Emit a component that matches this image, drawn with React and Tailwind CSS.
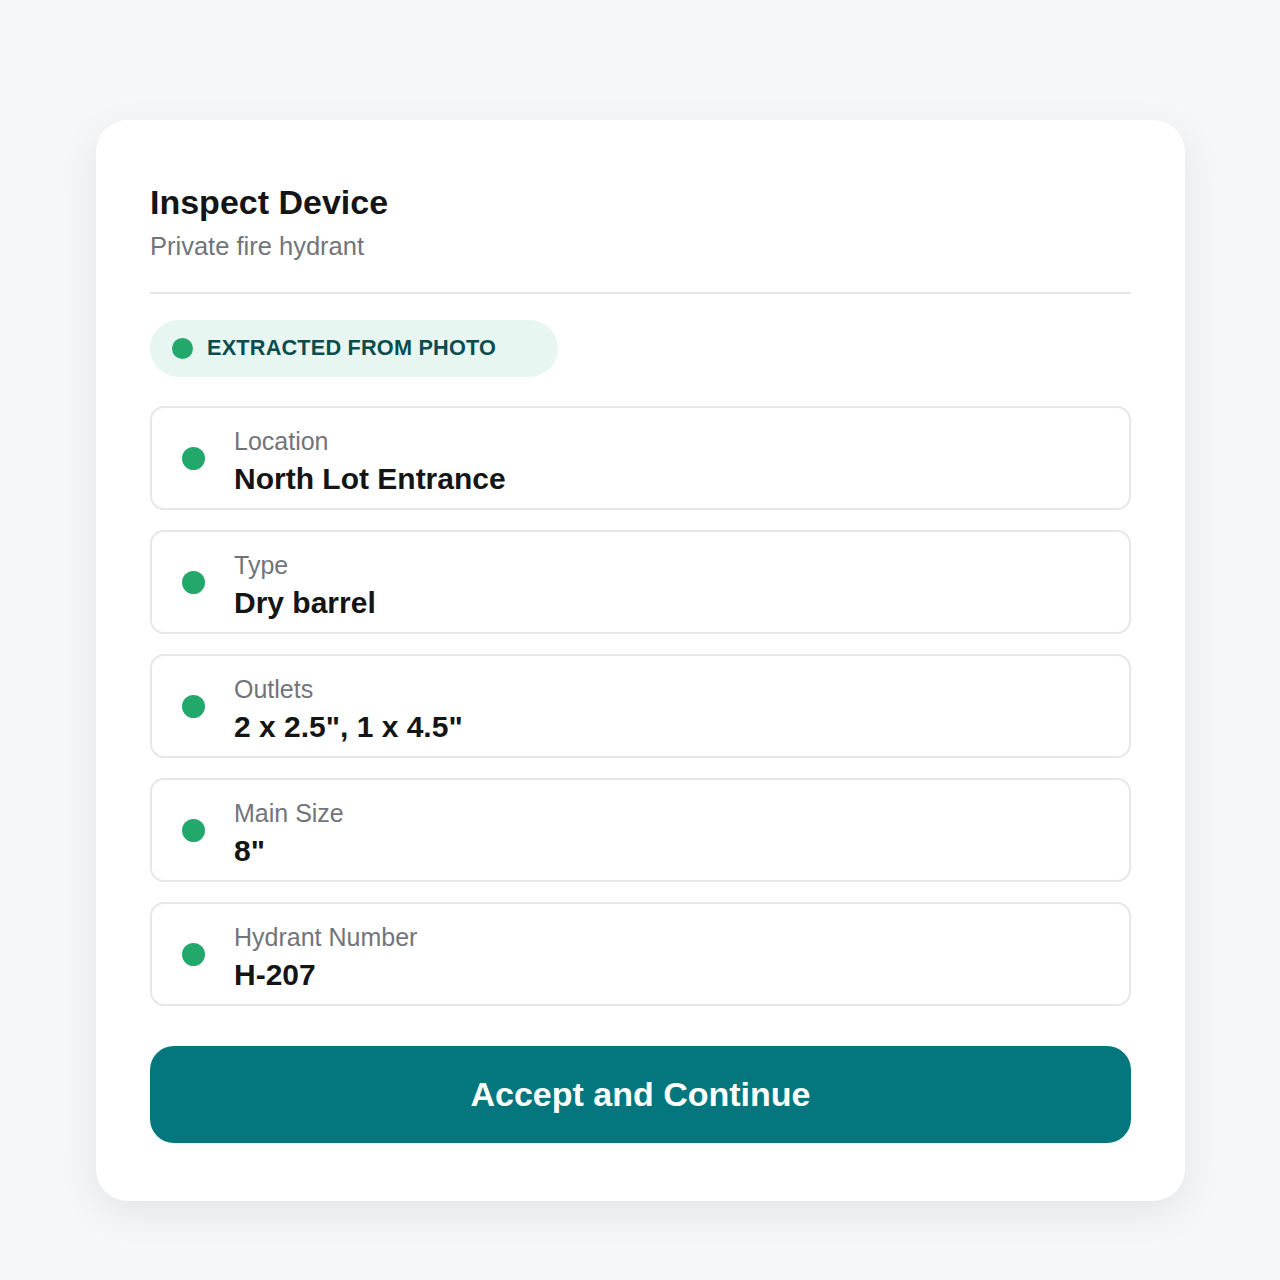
import React from 'react';

const fields = [
    { label: 'Location', value: 'North Lot Entrance' },
    { label: 'Type', value: 'Dry barrel' },
    { label: 'Outlets', value: '2 x 2.5", 1 x 4.5"' },
    { label: 'Main Size', value: '8"' },
    { label: 'Hydrant Number', value: 'H-207' },
];

export default function App() {
    return (
        <div className="min-h-[1280px] bg-[#f6f7f9] pt-[120px] px-[96px] font-['Liberation_Sans',Arial,sans-serif]">
            <div className="w-[1089px] bg-white rounded-[32px] shadow-[0_12px_40px_rgba(0,0,0,0.08)] px-[54px] pt-[60px] pb-[58px]">
                <h1 className="text-[34px] leading-[44px] font-bold text-[#151515]">Inspect Device</h1>
                <p className="text-[25.5px] leading-[32px] text-[#71757b] mt-[6px]">Private fire hydrant</p>
                <div className="h-[2px] bg-[#e6e7e9] mt-[30px]"></div>

                <div className="mt-[26px] inline-flex items-center gap-[14px] h-[57px] pl-[22px] pr-[62px] rounded-full bg-[#e8f6f2]">
                    <span className="w-[21px] h-[21px] rounded-full bg-[#22a86b]"></span>
                    <span className="text-[21.7px] font-bold text-[#0a4d4f] tracking-[0.2px]">EXTRACTED FROM PHOTO</span>
                </div>

                <div className="mt-[29px] flex flex-col gap-[20px]">
                    {fields.map(f => (
                        <div key={f.label} className="h-[104px] border-2 border-[#e6e7e9] rounded-[14px] flex items-center pl-[30px]">
                            <span className="w-[23px] h-[23px] rounded-full bg-[#22a86b] shrink-0"></span>
                            <div className="ml-[29px] flex flex-col">
                                <span className="text-[25px] leading-[42px] text-[#71757b]">{f.label}</span>
                                <span className="text-[30px] leading-[34px] font-bold text-[#151515]">{f.value}</span>
                            </div>
                        </div>
                    ))}
                </div>

                <button className="mt-[40px] w-full h-[97px] rounded-[24px] bg-[#04767e] text-white text-[34px] font-bold">
                    Accept and Continue
                </button>
            </div>
        </div>
    );
}
